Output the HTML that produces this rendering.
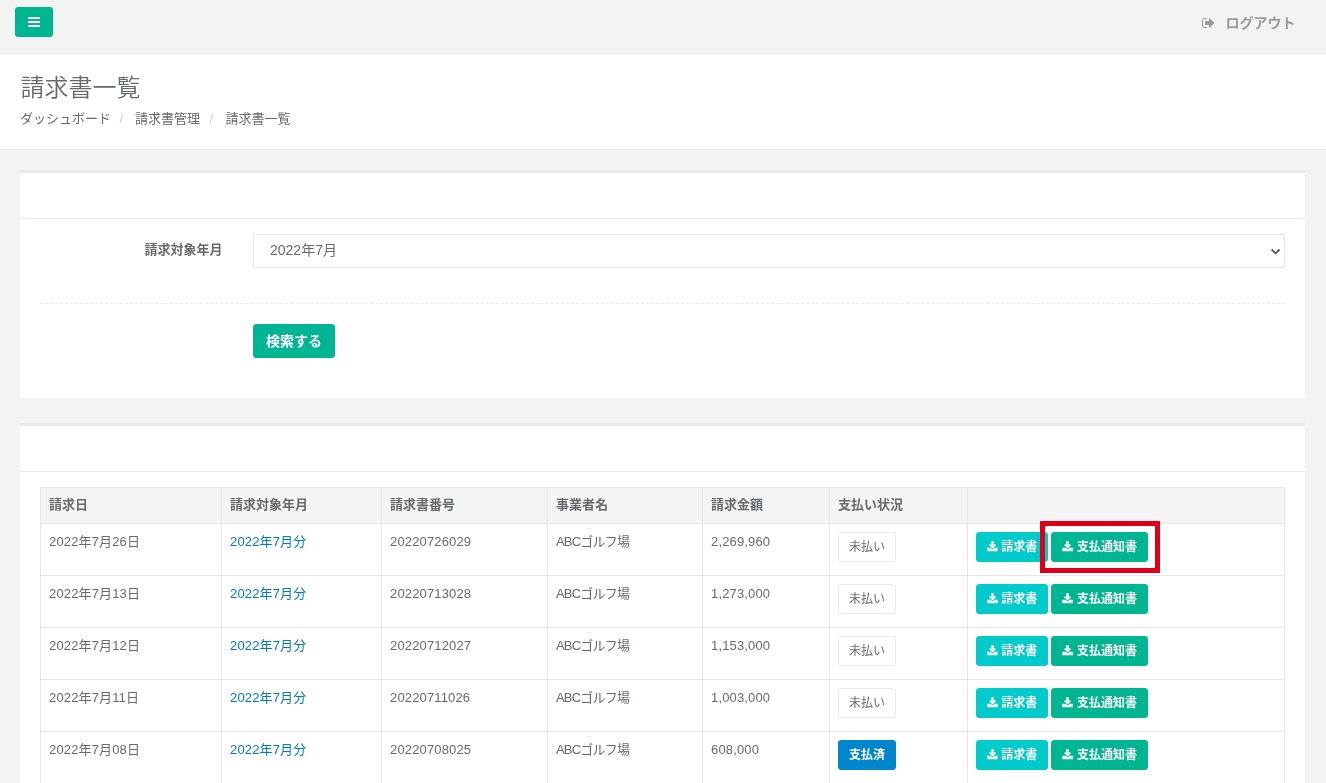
<!DOCTYPE html>
<html lang="ja">
<head>
<meta charset="utf-8">
<title>請求書一覧</title>
<style>
*{box-sizing:border-box;}
html,body{margin:0;padding:0;}
body{will-change:transform;width:1326px;height:783px;overflow:hidden;background:#f3f3f4;color:#676a6c;
  font-family:"Liberation Sans","Noto Sans CJK JP",sans-serif;font-size:13px;line-height:1.42857;position:relative;}
a{color:#007cbc;text-decoration:none;}
.navbar{position:absolute;left:0;top:0;width:1326px;height:54px;border-bottom:1px solid #e7eaec;background:#f3f3f4;}
.burger{position:absolute;left:15px;top:7px;width:38px;height:30px;background:#00b692;border-radius:3px;}
.burger i{position:absolute;left:13px;width:12px;height:2px;background:#fff;}
.logout{position:absolute;left:1225.5px;top:13px;font-size:14px;font-weight:bold;color:#999c9e;line-height:20px;white-space:nowrap;}
.logout svg{position:absolute;left:-23.9px;top:4.8px;}
.heading{position:absolute;left:0;top:54px;width:1326px;height:96px;background:#fff;border-bottom:1px solid #e7eaec;}
.heading h2{position:absolute;left:20.5px;top:17px;margin:0;font-size:24px;font-weight:350;line-height:34px;color:#676a6c;white-space:nowrap;}
.crumb{position:absolute;left:20px;top:55px;margin:0;padding:0;list-style:none;font-size:13px;line-height:19px;white-space:nowrap;}
.crumb li{display:inline-block;}
.crumb li+li:before{content:"/";padding:0 11.8px 0 8.6px;color:#ccc;}
.crumb li:nth-child(3):before{padding:0 12.4px 0 9.4px;}
.ibox{position:absolute;left:20px;width:1285px;background:#fff;border-top:3px solid #e7eaec;}
.ibox .title{height:46px;border-bottom:1px solid #e7eaec;}
#ib1{top:170px;height:228px;}
#ib2{top:423px;height:400px;}
.lbl{position:absolute;left:0;width:202.5px;text-align:right;top:67px;font-weight:bold;font-size:13px;line-height:19px;}
.sel{position:absolute;left:233px;top:61px;width:1032px;height:34px;border:1px solid #e5e6e7;border-radius:1px;background:#fff;padding:5px 16px;font-size:14px;line-height:20px;color:#676a6c;}
.sel svg{position:absolute;right:2.6px;top:12.600px;}
.dash{position:absolute;left:20px;top:130px;width:1245px;height:0;border-top:1px dashed #e7eaec;}
.btn{letter-spacing:0;display:inline-block;border:1px solid transparent;border-radius:3px;font-weight:bold;color:#fff;white-space:nowrap;vertical-align:middle;}
.search{position:absolute;left:233px;top:151px;width:82px;height:34px;background:#00b692;border-color:#00b692;font-size:14px;line-height:20px;padding:5.5px 12px;}
table{position:absolute;left:20px;top:61px;width:1244px;border-collapse:collapse;border:1px solid #e7e7e7;table-layout:fixed;}
th,td{border:1px solid #e7e7e7;padding:8px;text-align:left;vertical-align:top;line-height:1.42857;font-size:13px;}
th{background:#f5f5f6;font-weight:bold;line-height:19px;padding:7px 8px 9px;}
td{font-weight:normal;padding:9px 8px 7px;letter-spacing:.15px;}
td.nm{letter-spacing:-.8px;}
.sm{font-size:12px;line-height:18px;padding:5px 10px;margin-top:-1px;margin-bottom:6px;height:30px;vertical-align:top;}
.white{background:#fff;border-color:#e7eaec;color:#676a6c;font-weight:normal;}
.blue{background:#0086cc;border-color:#0086cc;}
.info{background:#00caca;border-color:#00caca;}
.prim{background:#00b692;border-color:#00b692;}
.sm.prim{margin-left:2.9px;}
.sm.prim svg{margin-right:3.7px;}
.sm svg{display:inline-block;width:11.14px;height:10.29px;vertical-align:-0.6px;margin-right:3.2px;}
.red{position:absolute;left:1040px;top:521px;width:120px;height:51.6px;border:5.8px solid #de0018;}
</style>
</head>
<body>
<div class="navbar">
  <div class="burger"><i style="top:10px"></i><i style="top:14px"></i><i style="top:18px"></i></div>
  <div class="logout"><svg width="12.25" height="10" viewBox="64 256 1568 1280"><path fill="#999c9e" d="M704 1440q0 4 1 20t.5 26.500-3 23.500-10 19.500-20.500 6.500h-320q-119 0-203.500-84.500t-84.500-203.500v-704q0-119 84.500-203.500t203.500-84.500h320q13 0 22.500 9.500t9.500 22.500q0 4 1 20t.5 26.500-3 23.500-10 19.500-20.500 6.500h-320q-66 0-113 47t-47 113v704q0 66 47 113t113 47h312l11.500 1 11.500 3 8 5.500 7 9 2 13.500zm928-544q0 26-19 45l-544 544q-19 19-45 19t-45-19-19-45v-288h-448q-26 0-45-19t-19-45v-384q0-26 19-45t45-19h448v-288q0-26 19-45t45-19 45 19l544 544q19 19 19 45z"/></svg>ログアウト</div>
</div>
<div class="heading">
  <h2>請求書一覧</h2>
  <ol class="crumb"><li>ダッシュボード</li><li>請求書管理</li><li>請求書一覧</li></ol>
</div>

<div class="ibox" id="ib1">
  <div class="title"></div>
  <div class="lbl">請求対象年月</div>
  <div class="sel">2022年7月<svg width="11" height="8" viewBox="0 0 11 8"><path d="M1.600 1.500L5.600 5.300 9.600 1.500" fill="none" stroke="#5a5a5a" stroke-width="1.800"/></svg></div>
  <div class="dash"></div>
  <div class="btn search">検索する</div>
</div>

<div class="ibox" id="ib2">
  <div class="title"></div>
  <table>
    <colgroup><col style="width:181px"><col style="width:160px"><col style="width:166px"><col style="width:155px"><col style="width:127px"><col style="width:138px"><col style="width:317px"></colgroup>
    <thead><tr><th>請求日</th><th>請求対象年月</th><th>請求書番号</th><th>事業者名</th><th>請求金額</th><th>支払い状況</th><th></th></tr></thead>
    <tbody>
      <tr><td>2022年7月26日</td><td><a>2022年7月分</a></td><td>20220726029</td><td class="nm">ABCゴルフ場</td><td>2,269,960</td><td><span class="btn sm white">未払い</span></td><td><span class="btn sm info"><svg viewBox="64 0 1664 1536"><path fill="#fff" d="M1344 1344q0-26-19-45t-45-19-45 19-19 45 19 45 45 19 45-19 19-45zm256 0q0-26-19-45t-45-19-45 19-19 45 19 45 45 19 45-19 19-45zm128-224v320q0 40-28 68t-68 28h-1472q-40 0-68-28t-28-68v-320q0-40 28-68t68-28h465l135 136q58 56 136 56t136-56l136-136h464q40 0 68 28t28 68zm-325-569q17 41-14 70l-448 448q-18 19-45 19t-45-19l-448-448q-31-29-14-70 17-39 59-39h256v-448q0-26 19-45t45-19h256q26 0 45 19t19 45v448h256q42 0 59 39z"/></svg>請求書</span><span class="btn sm prim"><svg viewBox="64 0 1664 1536"><path fill="#fff" d="M1344 1344q0-26-19-45t-45-19-45 19-19 45 19 45 45 19 45-19 19-45zm256 0q0-26-19-45t-45-19-45 19-19 45 19 45 45 19 45-19 19-45zm128-224v320q0 40-28 68t-68 28h-1472q-40 0-68-28t-28-68v-320q0-40 28-68t68-28h465l135 136q58 56 136 56t136-56l136-136h464q40 0 68 28t28 68zm-325-569q17 41-14 70l-448 448q-18 19-45 19t-45-19l-448-448q-31-29-14-70 17-39 59-39h256v-448q0-26 19-45t45-19h256q26 0 45 19t19 45v448h256q42 0 59 39z"/></svg>支払通知書</span></td></tr>
      <tr><td>2022年7月13日</td><td><a>2022年7月分</a></td><td>20220713028</td><td class="nm">ABCゴルフ場</td><td>1,273,000</td><td><span class="btn sm white">未払い</span></td><td><span class="btn sm info"><svg viewBox="64 0 1664 1536"><path fill="#fff" d="M1344 1344q0-26-19-45t-45-19-45 19-19 45 19 45 45 19 45-19 19-45zm256 0q0-26-19-45t-45-19-45 19-19 45 19 45 45 19 45-19 19-45zm128-224v320q0 40-28 68t-68 28h-1472q-40 0-68-28t-28-68v-320q0-40 28-68t68-28h465l135 136q58 56 136 56t136-56l136-136h464q40 0 68 28t28 68zm-325-569q17 41-14 70l-448 448q-18 19-45 19t-45-19l-448-448q-31-29-14-70 17-39 59-39h256v-448q0-26 19-45t45-19h256q26 0 45 19t19 45v448h256q42 0 59 39z"/></svg>請求書</span><span class="btn sm prim"><svg viewBox="64 0 1664 1536"><path fill="#fff" d="M1344 1344q0-26-19-45t-45-19-45 19-19 45 19 45 45 19 45-19 19-45zm256 0q0-26-19-45t-45-19-45 19-19 45 19 45 45 19 45-19 19-45zm128-224v320q0 40-28 68t-68 28h-1472q-40 0-68-28t-28-68v-320q0-40 28-68t68-28h465l135 136q58 56 136 56t136-56l136-136h464q40 0 68 28t28 68zm-325-569q17 41-14 70l-448 448q-18 19-45 19t-45-19l-448-448q-31-29-14-70 17-39 59-39h256v-448q0-26 19-45t45-19h256q26 0 45 19t19 45v448h256q42 0 59 39z"/></svg>支払通知書</span></td></tr>
      <tr><td>2022年7月12日</td><td><a>2022年7月分</a></td><td>20220712027</td><td class="nm">ABCゴルフ場</td><td>1,153,000</td><td><span class="btn sm white">未払い</span></td><td><span class="btn sm info"><svg viewBox="64 0 1664 1536"><path fill="#fff" d="M1344 1344q0-26-19-45t-45-19-45 19-19 45 19 45 45 19 45-19 19-45zm256 0q0-26-19-45t-45-19-45 19-19 45 19 45 45 19 45-19 19-45zm128-224v320q0 40-28 68t-68 28h-1472q-40 0-68-28t-28-68v-320q0-40 28-68t68-28h465l135 136q58 56 136 56t136-56l136-136h464q40 0 68 28t28 68zm-325-569q17 41-14 70l-448 448q-18 19-45 19t-45-19l-448-448q-31-29-14-70 17-39 59-39h256v-448q0-26 19-45t45-19h256q26 0 45 19t19 45v448h256q42 0 59 39z"/></svg>請求書</span><span class="btn sm prim"><svg viewBox="64 0 1664 1536"><path fill="#fff" d="M1344 1344q0-26-19-45t-45-19-45 19-19 45 19 45 45 19 45-19 19-45zm256 0q0-26-19-45t-45-19-45 19-19 45 19 45 45 19 45-19 19-45zm128-224v320q0 40-28 68t-68 28h-1472q-40 0-68-28t-28-68v-320q0-40 28-68t68-28h465l135 136q58 56 136 56t136-56l136-136h464q40 0 68 28t28 68zm-325-569q17 41-14 70l-448 448q-18 19-45 19t-45-19l-448-448q-31-29-14-70 17-39 59-39h256v-448q0-26 19-45t45-19h256q26 0 45 19t19 45v448h256q42 0 59 39z"/></svg>支払通知書</span></td></tr>
      <tr><td>2022年7月11日</td><td><a>2022年7月分</a></td><td>20220711026</td><td class="nm">ABCゴルフ場</td><td>1,003,000</td><td><span class="btn sm white">未払い</span></td><td><span class="btn sm info"><svg viewBox="64 0 1664 1536"><path fill="#fff" d="M1344 1344q0-26-19-45t-45-19-45 19-19 45 19 45 45 19 45-19 19-45zm256 0q0-26-19-45t-45-19-45 19-19 45 19 45 45 19 45-19 19-45zm128-224v320q0 40-28 68t-68 28h-1472q-40 0-68-28t-28-68v-320q0-40 28-68t68-28h465l135 136q58 56 136 56t136-56l136-136h464q40 0 68 28t28 68zm-325-569q17 41-14 70l-448 448q-18 19-45 19t-45-19l-448-448q-31-29-14-70 17-39 59-39h256v-448q0-26 19-45t45-19h256q26 0 45 19t19 45v448h256q42 0 59 39z"/></svg>請求書</span><span class="btn sm prim"><svg viewBox="64 0 1664 1536"><path fill="#fff" d="M1344 1344q0-26-19-45t-45-19-45 19-19 45 19 45 45 19 45-19 19-45zm256 0q0-26-19-45t-45-19-45 19-19 45 19 45 45 19 45-19 19-45zm128-224v320q0 40-28 68t-68 28h-1472q-40 0-68-28t-28-68v-320q0-40 28-68t68-28h465l135 136q58 56 136 56t136-56l136-136h464q40 0 68 28t28 68zm-325-569q17 41-14 70l-448 448q-18 19-45 19t-45-19l-448-448q-31-29-14-70 17-39 59-39h256v-448q0-26 19-45t45-19h256q26 0 45 19t19 45v448h256q42 0 59 39z"/></svg>支払通知書</span></td></tr>
      <tr><td>2022年7月08日</td><td><a>2022年7月分</a></td><td>20220708025</td><td class="nm">ABCゴルフ場</td><td>608,000</td><td><span class="btn sm blue">支払済</span></td><td><span class="btn sm info"><svg viewBox="64 0 1664 1536"><path fill="#fff" d="M1344 1344q0-26-19-45t-45-19-45 19-19 45 19 45 45 19 45-19 19-45zm256 0q0-26-19-45t-45-19-45 19-19 45 19 45 45 19 45-19 19-45zm128-224v320q0 40-28 68t-68 28h-1472q-40 0-68-28t-28-68v-320q0-40 28-68t68-28h465l135 136q58 56 136 56t136-56l136-136h464q40 0 68 28t28 68zm-325-569q17 41-14 70l-448 448q-18 19-45 19t-45-19l-448-448q-31-29-14-70 17-39 59-39h256v-448q0-26 19-45t45-19h256q26 0 45 19t19 45v448h256q42 0 59 39z"/></svg>請求書</span><span class="btn sm prim"><svg viewBox="64 0 1664 1536"><path fill="#fff" d="M1344 1344q0-26-19-45t-45-19-45 19-19 45 19 45 45 19 45-19 19-45zm256 0q0-26-19-45t-45-19-45 19-19 45 19 45 45 19 45-19 19-45zm128-224v320q0 40-28 68t-68 28h-1472q-40 0-68-28t-28-68v-320q0-40 28-68t68-28h465l135 136q58 56 136 56t136-56l136-136h464q40 0 68 28t28 68zm-325-569q17 41-14 70l-448 448q-18 19-45 19t-45-19l-448-448q-31-29-14-70 17-39 59-39h256v-448q0-26 19-45t45-19h256q26 0 45 19t19 45v448h256q42 0 59 39z"/></svg>支払通知書</span></td></tr>
    </tbody>
  </table>
</div>
<div class="red"></div>
</body>
</html>
